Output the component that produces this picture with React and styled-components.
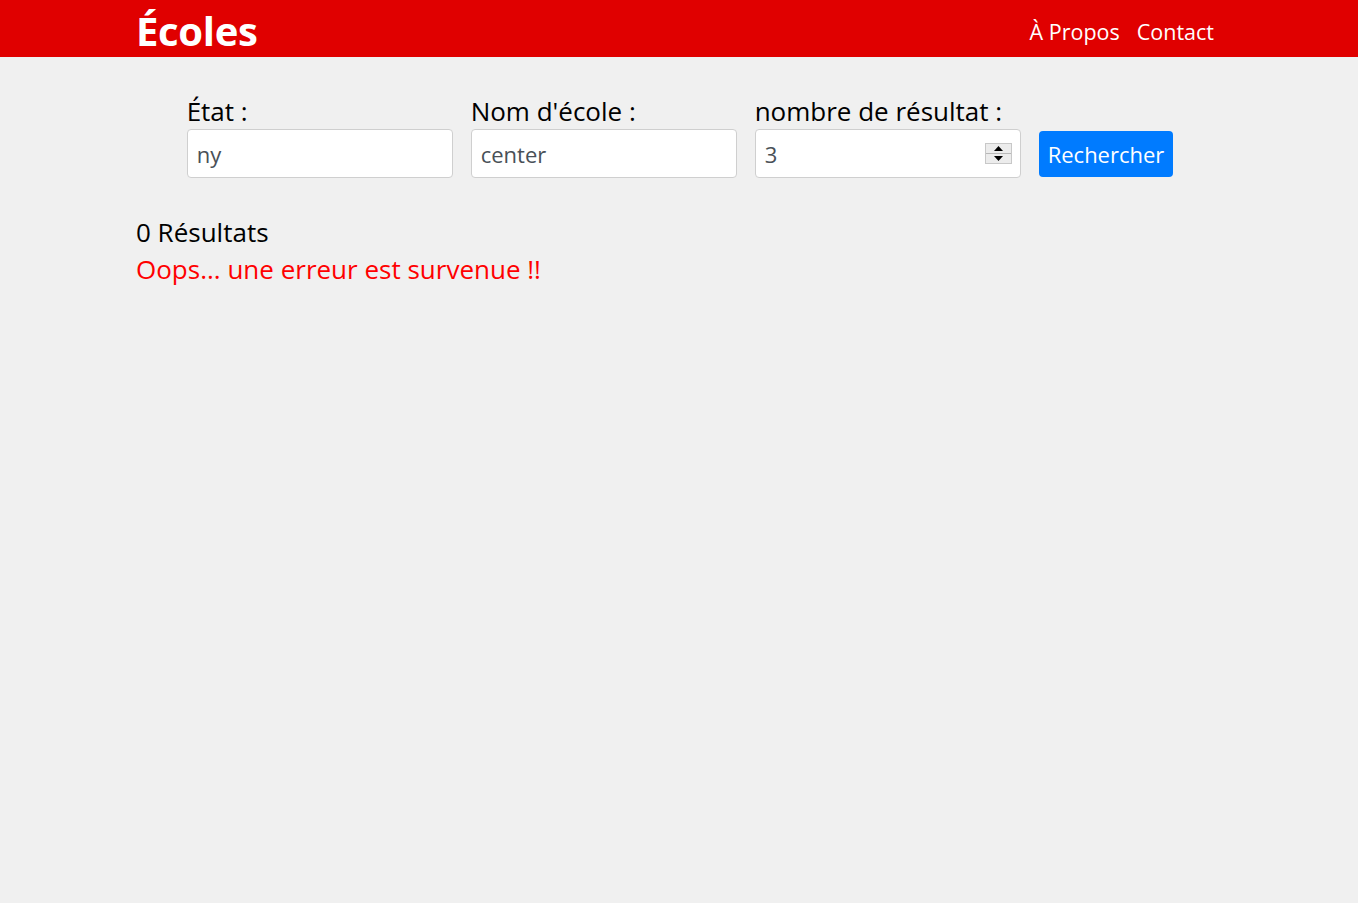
import React from 'react';
import styled, { createGlobalStyle } from 'styled-components';

const GlobalStyle = createGlobalStyle`
    body {
        margin:0;
        background:#f0f0f0;
        font-family:"Open Sans", "Noto Sans", sans-serif;
        color:#000;
    }
`;

const Header = styled.header`
    height:57px;
    background:#e00000;
    box-sizing:border-box;
`;

const HeaderInner = styled.div`
    width:1086px;
    height:100%;
    margin:0 auto;
    display:flex;
    align-items:center;
    justify-content:space-between;
`;

const Brand = styled.a`
    color:#fff;
    font-size:40px;
    font-weight:700;
    letter-spacing:-0.3px;
    text-decoration:none;
    line-height:1;
    padding-top:4px;
`;

const Nav = styled.nav`
    display:flex;
    gap:17px;
    padding-right:8px;
    padding-top:6px;
`;

const NavLink = styled.a`
    color:#fff;
    font-size:21.5px;
    text-decoration:none;
`;

const Main = styled.main`
    width:1086px;
    margin:0 auto;
`;

const Form = styled.form`
    display:flex;
    justify-content:center;
    align-items:flex-end;
    gap:18px;
    padding-top:36px;
    padding-left:2px;
`;

const Field = styled.div`
    display:flex;
    flex-direction:column;
`;

const Label = styled.label`
    font-size:26px;
    line-height:36px;
`;

const InputWrap = styled.div`
    position:relative;
`;

const Input = styled.input`
    width:266px;
    height:49px;
    box-sizing:border-box;
    border:1px solid #cfcfcf;
    border-radius:4px;
    background:#fff;
    padding:0 9px;
    font-family:inherit;
    font-size:22px;
    color:#495057;
    outline:none;
    appearance:textfield;
    &::-webkit-inner-spin-button,
    &::-webkit-outer-spin-button {
        -webkit-appearance:none;
        margin:0;
    }
`;

const Spinner = styled.div`
    position:absolute;
    right:9px;
    top:14px;
    width:27px;
    height:21px;
    display:flex;
    flex-direction:column;
    border:1px solid #c8c8c8;
    box-sizing:border-box;
`;

const SpinHalf = styled.div`
    flex:1;
    background:#ececec;
    display:flex;
    align-items:center;
    justify-content:center;
    border-top:${p => (p.bottom ? '1px solid #b8b8b8' : 'none')};
`;

const Button = styled.button`
    height:46px;
    margin-bottom:1px;
    padding:0 9px;
    border:none;
    border-radius:4px;
    background:#007bff;
    color:#fff;
    font-family:inherit;
    font-size:22px;
    cursor:pointer;
`;

const Results = styled.section`
    padding-top:36px;
`;

const Count = styled.div`
    font-size:26px;
    line-height:37px;
`;

const Error = styled.div`
    font-size:26px;
    line-height:37px;
    color:#ff0000;
`;

const Arrow = ({ down }) => (
    <svg width="9" height="5" viewBox="0 0 9 5">
        <path d={down ? 'M0 0h9L4.5 5z' : 'M0 5h9L4.5 0z'} fill="#000" />
    </svg>
);

const App = () => {
    return (
        <>
            <GlobalStyle />
            <Header>
                <HeaderInner>
                    <Brand href="#">Écoles</Brand>
                    <Nav>
                        <NavLink href="#">À Propos</NavLink>
                        <NavLink href="#">Contact</NavLink>
                    </Nav>
                </HeaderInner>
            </Header>
            <Main>
                <Form onSubmit={e => e.preventDefault()}>
                    <Field>
                        <Label>État :</Label>
                        <Input defaultValue="ny" />
                    </Field>
                    <Field>
                        <Label>Nom d'école :</Label>
                        <Input defaultValue="center" />
                    </Field>
                    <Field>
                        <Label>nombre de résultat :</Label>
                        <InputWrap>
                            <Input type="number" defaultValue="3" />
                            <Spinner>
                                <SpinHalf><Arrow /></SpinHalf>
                                <SpinHalf bottom><Arrow down /></SpinHalf>
                            </Spinner>
                        </InputWrap>
                    </Field>
                    <Button type="submit">Rechercher</Button>
                </Form>
                <Results>
                    <Count>0 Résultats</Count>
                    <Error>Oops... une erreur est survenue !!</Error>
                </Results>
            </Main>
        </>
    );
};

export default App;
